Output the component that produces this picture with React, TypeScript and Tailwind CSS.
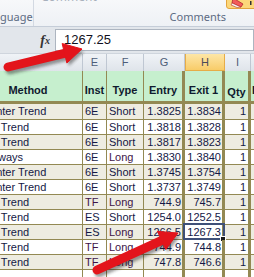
import React from "react";

type Row = { m: string; i: string; t: string; e: string; x: string };

const rows: Row[] = [
  { m: "Counter Trend", i: "6E", t: "Short", e: "1.3825", x: "1.3834" },
  { m: "With Trend", i: "6E", t: "Short", e: "1.3818", x: "1.3828" },
  { m: "With Trend", i: "6E", t: "Short", e: "1.3817", x: "1.3823" },
  { m: "Sideways", i: "6E", t: "Long", e: "1.3830", x: "1.3840" },
  { m: "Counter Trend", i: "6E", t: "Short", e: "1.3745", x: "1.3754" },
  { m: "Counter Trend", i: "6E", t: "Short", e: "1.3737", x: "1.3749" },
  { m: "With Trend", i: "TF", t: "Long", e: "744.9", x: "745.7" },
  { m: "With Trend", i: "ES", t: "Short", e: "1254.0", x: "1252.5" },
  { m: "With Trend", i: "ES", t: "Long", e: "1266.5", x: "1267.3" },
  { m: "With Trend", i: "TF", t: "Long", e: "744.9", x: "744.8" },
  { m: "With Trend", i: "TF", t: "Long", e: "747.8", x: "746.6" },
];

const navy = "text-[#141846]";
const purple = "text-[#3e1448]";

function Arrow({ x1, y1, x2, y2 }: { x1: number; y1: number; x2: number; y2: number }) {
  const dx = x2 - x1;
  const dy = y2 - y1;
  const len = Math.hypot(dx, dy);
  const ux = dx / len;
  const uy = dy / len;
  const nx = -uy;
  const ny = ux;
  const hl = 18;
  const hw = 10;
  const bx = x2 - hl * ux;
  const by = y2 - hl * uy;
  const p1 = `${x2},${y2}`;
  const p2 = `${bx + hw * nx},${by + hw * ny}`;
  const p3 = `${bx - hw * nx},${by - hw * ny}`;
  const sx = bx + 2 * ux;
  const sy = by + 2 * uy;
  return (
    <g>
      <g transform="translate(2,3)" opacity="0.45" filter="url(#blur)">
        <line x1={x1} y1={y1} x2={sx} y2={sy} stroke="#202020" strokeWidth="9" strokeLinecap="round" />
        <polygon points={`${p1} ${p2} ${p3}`} fill="#202020" />
      </g>
      <line x1={x1} y1={y1} x2={sx} y2={sy} stroke="#e3141b" strokeWidth="9" strokeLinecap="round" />
      <polygon points={`${p1} ${p2} ${p3}`} fill="#e3141b" strokeLinejoin="round" stroke="#e3141b" strokeWidth="1" />
    </g>
  );
}

export default function App() {
  return (
    <div className="relative w-[254px] h-[277px] overflow-hidden bg-white font-['Liberation_Sans',sans-serif]">
      {/* Ribbon */}
      <div className="flex h-[27px] border-b border-[#c5cdd8] bg-gradient-to-b from-[#f7f8fa] to-[#eef1f5] font-['Noto_Sans',sans-serif] text-[11px] text-[#5d6b83]">
        <div className="flex w-[34px] shrink-0 flex-col justify-end overflow-hidden border-r border-[#d3d9e2] pb-[2px] pr-[3px] leading-[14px]">
          <span className="ml-auto whitespace-nowrap">guage</span>
        </div>
        <div className="flex flex-1 flex-col">
          <div className="flex h-[10px] items-start">
            <span className="ml-[7px] mt-[-11px] text-[12px] leading-[16px] text-[#a8b0bc]">Comment</span>
            <div className="ml-auto mr-[-2px]">
              <svg width="30" height="9" viewBox="0 0 30 9">
                <rect x="0.5" y="-6" width="30" height="14.5" rx="2.5" fill="#fcd77a" stroke="#e3a43d" />
                <path d="M7 -2 L17 4 L15 7 L6 3 Z" fill="#f25a5a" stroke="#b32a2a" strokeWidth="0.8" />
                <path d="M6 3 L15 7 L11 7.5 L5 5 Z" fill="#f7f7f7" stroke="#b32a2a" strokeWidth="0.6" />
                <rect x="24" y="1" width="1.5" height="4" fill="#333" />
              </svg>
            </div>
          </div>
          <div className="flex flex-1 items-end justify-end pb-[2px] pr-[28px] leading-[14px]">
            <span>Comments</span>
          </div>
        </div>
      </div>

      {/* Formula bar */}
      <div className="flex h-[26px] items-center bg-[#e2e6eb]">
        <div className="flex w-[55px] shrink-0 justify-end pr-[5px] pt-[1px] font-['Liberation_Serif',serif] font-bold italic text-[#333]">
          <span className="text-[14px] leading-[14px]">f</span>
          <span className="text-[10px] leading-[14px] self-end">x</span>
        </div>
        <div className="flex h-[22px] flex-1 items-center border border-[#adb5c0] bg-white pl-[8px] text-[13px] text-[#101020]">
          1267.25
        </div>
      </div>

      {/* Column letters */}
      <div className="flex h-[18px] border-t border-[#cfd5dd] bg-gradient-to-b from-[#f0f3f7] to-[#dfe4ea] text-[11px] text-[#4e5d78]">
        <div className="ml-[-26px] flex w-[109px] shrink-0 border-r border-[#bfc7d2]" />
        <div className="flex w-[24px] shrink-0 items-center justify-center border-r border-[#bfc7d2]">E</div>
        <div className="flex w-[37px] shrink-0 items-center justify-center border-r border-[#bfc7d2]">F</div>
        <div className="flex w-[41px] shrink-0 items-center justify-center border-r border-[#bfc7d2]">G</div>
        <div className="flex w-[40px] shrink-0 items-center justify-center border-x border-b border-[#e6ac48] bg-gradient-to-b from-[#fde6a6] to-[#f8cc68] text-[#4a4a5a]">H</div>
        <div className="flex w-[26px] shrink-0 items-center justify-center border-r border-[#bfc7d2]">I</div>
        <div className="flex-1" />
      </div>

      {/* Green header */}
      <div className="flex h-[33px] border-b-[3px] border-[#938953] bg-[#c6efce] text-[11px] font-bold text-[#0f1a2e]">
        <div className="ml-[-26px] flex w-[109px] shrink-0 items-end justify-center border-r border-[#938953] pb-[3px]">Method</div>
        <div className="flex w-[24px] shrink-0 items-end justify-center border-r border-[#938953] pb-[3px]">Inst</div>
        <div className="flex w-[37px] shrink-0 items-end justify-center border-r border-[#938953] pb-[3px]">Type</div>
        <div className="flex w-[41px] shrink-0 items-end justify-center border-r-[3px] border-[#938953] pb-[3px]">Entry</div>
        <div className="flex w-[40px] shrink-0 items-end justify-center border-r-[3px] border-[#938953] pb-[3px]">Exit 1</div>
        <div className="flex w-[26px] shrink-0 items-end justify-center border-r-[3px] border-[#938953] pb-[1px]">Qty</div>
        <div className="flex flex-1 items-end overflow-hidden whitespace-nowrap pb-[3px] pl-[1px]">Exit 2</div>
      </div>

      {/* Data rows */}
      <div className="flex flex-col text-[11px]">
        {rows.map((r, idx) => {
          const beige = idx % 2 === 0;
          const bg = beige ? "bg-[#eeece1]" : "bg-white";
          const selected = idx === 8;
          const h = idx === 0 ? "h-[16px]" : "h-[15px]";
          return (
            <div key={idx} className={`flex ${h} border-b border-[#938953] ${bg} ${navy}`}>
              <div className="ml-[-26px] flex w-[109px] shrink-0 items-center overflow-hidden whitespace-nowrap border-r border-[#938953] pl-[2px]">
                {r.m}
              </div>
              <div className={`flex w-[24px] shrink-0 items-center border-r border-[#938953] pl-[2px] ${r.i === "TF" ? purple : ""}`}>
                {r.i}
              </div>
              <div className={`flex w-[37px] shrink-0 items-center border-r border-[#938953] pl-[2px] ${r.t === "Long" ? purple : ""}`}>
                {r.t}
              </div>
              <div className="flex w-[41px] shrink-0 items-center justify-end border-r-[3px] border-[#938953] pr-[1px]">
                {r.e}
              </div>
              <div
                className={`relative flex w-[40px] shrink-0 items-center justify-end border-r-[3px] border-[#938953] pr-[1px] ${
                  selected ? "bg-white" : ""
                }`}
              >
                {r.x}
                {selected && (
                  <>
                    <div className="absolute -left-[2px] -top-[2px] -right-[3px] -bottom-[1px] border-2 border-[#3f5078]" />
                    <div className="absolute left-[35px] top-[11px] h-[6px] w-[6px] border border-white bg-[#1a1a1a]" />
                  </>
                )}
              </div>
              <div className="flex w-[26px] shrink-0 items-center justify-end border-r-[3px] border-[#938953] pr-[2px]">1</div>
              <div className="flex-1" />
            </div>
          );
        })}
        <div className="flex h-[15px] bg-white">
          <div className="ml-[-26px] w-[109px] shrink-0 border-r border-[#938953]" />
          <div className="w-[24px] shrink-0 border-r border-[#938953]" />
          <div className="w-[37px] shrink-0 border-r border-[#938953]" />
          <div className="w-[41px] shrink-0 border-r-[3px] border-[#938953]" />
          <div className="w-[40px] shrink-0 border-r-[3px] border-[#938953]" />
          <div className="w-[26px] shrink-0 border-r-[3px] border-[#938953]" />
          <div className="flex-1" />
        </div>
      </div>

      {/* Arrows overlay */}
      <svg className="pointer-events-none absolute left-0 top-0" width="254" height="277" viewBox="0 0 254 277">
        <defs>
          <filter id="blur" x="-20%" y="-50%" width="140%" height="200%">
            <feGaussianBlur stdDeviation="1.5" />
          </filter>
        </defs>
        <Arrow x1={8} y1={67} x2={82} y2={49} />
        <Arrow x1={97} y1={270} x2={178} y2={233} />
      </svg>
    </div>
  );
}
